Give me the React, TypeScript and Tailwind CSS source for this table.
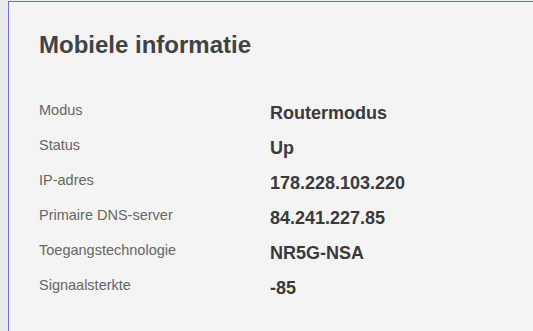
import React from 'react';

const rows = [
  { label: 'Modus', value: 'Routermodus' },
  { label: 'Status', value: 'Up' },
  { label: 'IP-adres', value: '178.228.103.220' },
  { label: 'Primaire DNS-server', value: '84.241.227.85' },
  { label: 'Toegangstechnologie', value: 'NR5G-NSA' },
  { label: 'Signaalsterkte', value: '-85' },
];

export default function App() {
  return (
    <div className="h-screen overflow-hidden bg-[#ebebeb] pt-px pl-2 font-['Liberation_Sans',Arial,sans-serif]">
      {/* Mobile info panel */}
      <div className="h-full border-l border-t border-[#6b6bff] bg-[#f4f4f4] pl-[30px] pt-[29px]">
        <h1 className="text-[24px] leading-[28px] font-bold text-[#424242]">
          Mobiele informatie
        </h1>

        <div className="mt-[41px] flex flex-col">
          {rows.map((row) => (
            <div key={row.label} className="flex h-[35px] items-start">
              <div className="w-[231px] shrink-0 text-[14.5px] leading-[20px] text-[#666666]">
                {row.label}
              </div>
              <div className="text-[18px] leading-[26px] font-bold text-[#3a3a3a]">
                {row.value}
              </div>
            </div>
          ))}
        </div>
      </div>
    </div>
  );
}
